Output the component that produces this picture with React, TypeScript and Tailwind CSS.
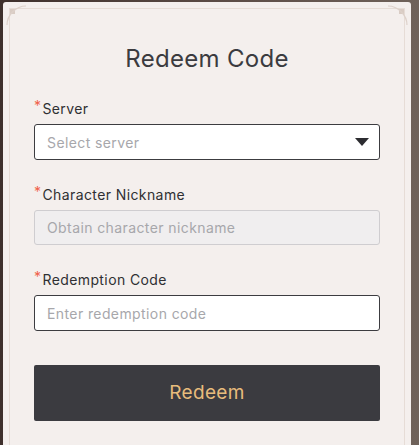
function Corner({ className }: { className: string }) {
  return (
    <svg className={`absolute ${className}`} width="22" height="22" viewBox="0 0 22 22" fill="none">
      <rect x="4" y="4" width="5" height="5" fill="#d9ccc4" />
      <path d="M1 20 C1 10 10 1 20 1" stroke="#ddd1ca" strokeWidth="1.2" />
    </svg>
  )
}

function Label({ text }: { text: string }) {
  return (
    <div className="flex items-start text-[14px] leading-[18px] text-[#2f2f33] tracking-[0.4px]">
      <span className="text-[#f0604a] text-[14px] leading-[12px] mr-[1px]">*</span>
      {text}
    </div>
  )
}

export default function App() {
  return (
    <div
      className="w-[419px] h-[445px] overflow-hidden bg-gradient-to-r from-[#3e302c] via-[#5a4a44] to-[#6f625a] pt-[2px] pl-[3px]"
      style={{ fontFamily: 'Inter, "Noto Sans", sans-serif' }}
    >
      <div className="relative w-[408px] h-[460px] bg-[#f4efed] rounded-t-[3px] p-[6px]">
        <div className="h-full border border-[#e6dcd6] px-[24px] pt-[35px]">
          <h1 className="text-center text-[24px] leading-[30px] text-[#3b3b3f] font-normal tracking-[0.3px]">
            Redeem Code
          </h1>

          <div className="mt-[26px]">
            <Label text="Server" />
            <div className="mt-[6px] h-[36px] bg-white border-[1.5px] border-[#3c3c40] rounded-[3px] flex items-center justify-between pl-[12px] pr-[10px]">
              <span className="text-[14px] text-[#a7a7ab] tracking-[0.4px]">Select server</span>
              <svg width="14" height="9" viewBox="0 0 14 9">
                <path d="M0 0 H14 L7 8 Z" fill="#2c2c30" />
              </svg>
            </div>
          </div>

          <div className="mt-[26px]">
            <Label text="Character Nickname" />
            <div className="mt-[6px] h-[35px] bg-[#f0eeef] border border-[#cfcdd0] rounded-[3px] flex items-center pl-[12px]">
              <span className="text-[14px] text-[#a7a7ab] tracking-[0.4px]">Obtain character nickname</span>
            </div>
          </div>

          <div className="mt-[26px]">
            <Label text="Redemption Code" />
            <div className="mt-[6px] h-[36px] bg-white border-[1.5px] border-[#3c3c40] rounded-[3px] flex items-center pl-[12px]">
              <span className="text-[14px] text-[#a7a7ab] tracking-[0.4px]">Enter redemption code</span>
            </div>
          </div>

          <button className="mt-[34px] w-full h-[56px] bg-[#3b3b40] rounded-[2px] text-[#e8bc7c] text-[19px] tracking-[0.3px]">
            Redeem
          </button>
        </div>
        <Corner className="left-[3px] top-[3px]" />
        <Corner className="right-[3px] top-[3px] -scale-x-100" />
      </div>
    </div>
  )
}
